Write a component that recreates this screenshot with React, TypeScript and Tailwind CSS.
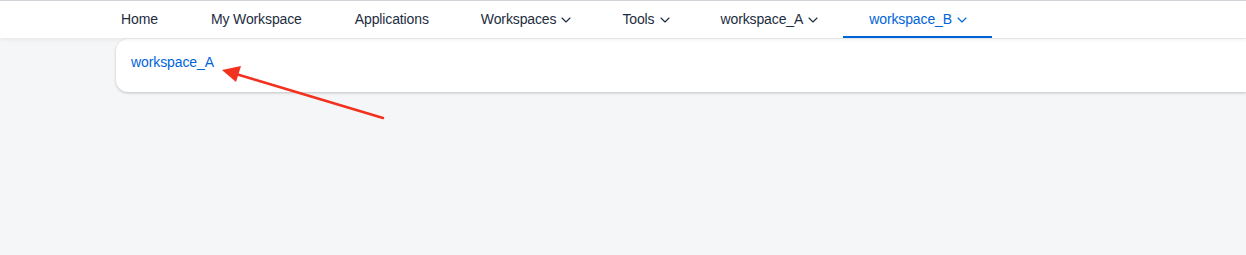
type NavItem = {
    label: string;
    menu?: boolean;
    active?: boolean;
};

const items: NavItem[] = [
    { label: "Home" },
    { label: "My Workspace" },
    { label: "Applications" },
    { label: "Workspaces", menu: true },
    { label: "Tools", menu: true },
    { label: "workspace_A", menu: true },
    { label: "workspace_B", menu: true, active: true },
];

function Chevron() {
    return (
        <svg width="10" height="6" viewBox="0 0 10 6" className="mt-[3px]">
            <path d="M1 1 L5 5 L9 1" fill="none" stroke="currentColor" strokeWidth="1.1" strokeLinecap="round" strokeLinejoin="round" />
        </svg>
    );
}

function NavTab({ label, menu, active }: NavItem) {
    return (
        <div
            className={
                active
                    ? "flex h-full items-center gap-[5px] pl-[26px] pr-[25px] border-b-2 border-[#0064d9] text-[#0064d9]"
                    : menu
                      ? "flex h-full items-center gap-[5px] pl-[26px] pr-[25px] border-b-2 border-transparent text-[#1d2d3e]"
                      : "flex h-full items-center pl-[27px] pr-[26px] border-b-2 border-transparent text-[#1d2d3e]"
            }
        >
            <span className="pt-[1px]">{label}</span>
            {menu && <Chevron />}
        </div>
    );
}

export default function App() {
    return (
        <div
            className="relative h-[255px] w-[1246px] overflow-hidden bg-[#f5f6f7] text-[14px]"
            style={{ fontFamily: '"Liberation Sans", Arial, sans-serif' }}
        >
            <header className="relative z-10 h-[38px] border-t border-[#cfd3d8] bg-white shadow-[0_2px_4px_rgba(0,0,0,0.06)]">
                <nav className="flex h-full items-stretch pl-[94px] tracking-[-0.12px]">
                    {items.map((item) => (
                        <NavTab key={item.label} {...item} />
                    ))}
                </nav>
            </header>

            <div className="ml-[116px] mt-[1px] flex h-[53px] items-center rounded-l-[12px] bg-white pl-[15px] pb-[6px] shadow-[0_1px_3px_rgba(0,0,0,0.22)]">
                <span className="tracking-[-0.1px] text-[#0064d9]">workspace_A</span>
            </div>

            {/* annotation arrow */}
            <svg className="absolute left-0 top-0 pointer-events-none" width="1246" height="255">
                <line x1="383" y1="118" x2="236" y2="74" stroke="#f2321e" strokeWidth="2.5" strokeLinecap="round" />
                <polygon points="222,70 241,66 236,82" fill="#f2321e" />
            </svg>
        </div>
    );
}
